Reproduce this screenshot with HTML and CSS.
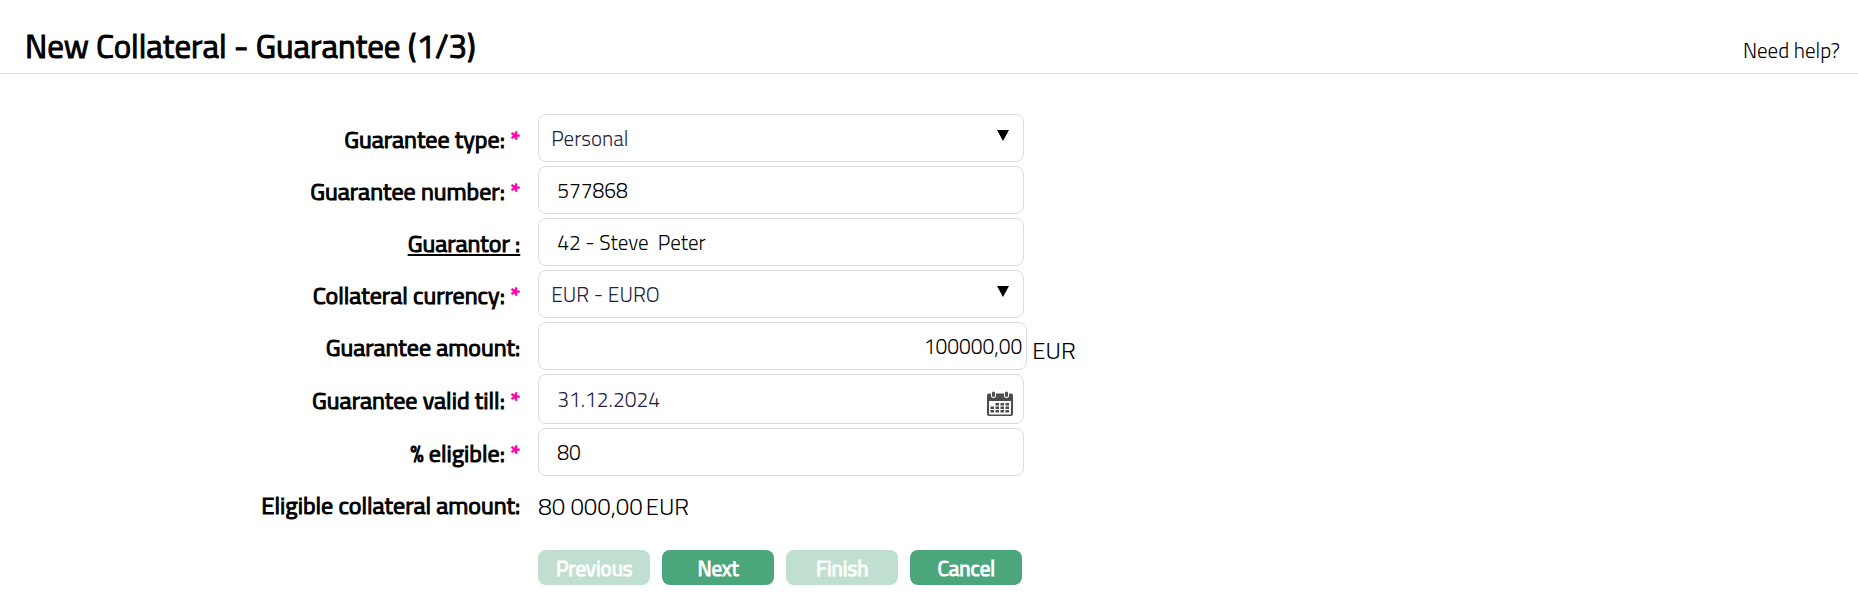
FILE: index.html
```
<!DOCTYPE html>
<html lang="en">
<head>
<meta charset="UTF-8">
<title>New Collateral - Guarantee</title>
<link rel="stylesheet" href="styles.css">
</head>
<body>
  <div class="header">
    <h1>New Collateral - Guarantee (1/3)</h1>
    <a class="help" href="#help">Need help?</a>
  </div>

  <form class="form">
    <div class="row">
      <label for="guarantee_type">Guarantee type: <span class="req">*</span></label>
      <div class="field">
        <select id="guarantee_type">
          <option>Personal</option>
        </select>
        <svg class="arrow" viewBox="0 0 12 11"><path d="M0 0h12L6 11z"/></svg>
      </div>
    </div>

    <div class="row">
      <label for="guarantee_number">Guarantee number: <span class="req">*</span></label>
      <div class="field">
        <input type="text" id="guarantee_number" value="577868">
      </div>
    </div>

    <div class="row">
      <label for="guarantor" class="link">Guarantor :</label>
      <div class="field">
        <input type="text" id="guarantor" value="42 - Steve  Peter">
      </div>
    </div>

    <div class="row">
      <label for="currency">Collateral currency: <span class="req">*</span></label>
      <div class="field">
        <select id="currency">
          <option>EUR - EURO</option>
        </select>
        <svg class="arrow" viewBox="0 0 12 11"><path d="M0 0h12L6 11z"/></svg>
      </div>
    </div>

    <div class="row">
      <label for="amount">Guarantee amount:</label>
      <div class="field wide">
        <input type="text" id="amount" class="amount" value="100000,00">
      </div>
      <span class="unit">EUR</span>
    </div>

    <div class="row">
      <label for="valid_till">Guarantee valid till: <span class="req">*</span></label>
      <div class="field">
        <input type="text" id="valid_till" class="date" value="31.12.2024">
        <button type="button" class="calendar" aria-label="Pick a date">
          <svg viewBox="0 0 26 25">
            <path fill="#4c4c4c" fill-rule="evenodd" d="M2 2.500h2v2a2.500 2.500 0 0 0 5 0v-2h8v2a2.500 2.500 0 0 0 5 0v-2h2a2 2 0 0 1 2 2V23a2 2 0 0 1-2 2H2a2 2 0 0 1-2-2V4.500a2 2 0 0 1 2-2zM2 10v12.500a1 1 0 0 0 1 1h20a1 1 0 0 0 1-1V10z"/>
            <path stroke="#4c4c4c" stroke-width="3" stroke-linecap="round" d="M6.500 2v2.500M19.500 2v2.500"/>
            <path fill="#4c4c4c" d="M8.500 12H12v2.500H8.500zM13.500 12H17v2.500h-3.500zM18.500 12H22v2.500h-3.500zM3.500 15.500H7V18H3.500zM8.500 15.500H12V18H8.500zM13.500 15.500H17V18h-3.500zM18.500 15.500H22V18h-3.500zM3.500 19H7v2.500H3.500zM8.500 19H12v2.500H8.500zM13.500 19H17v2.500h-3.500zM18.500 19H22v2.500h-3.500z"/>
          </svg>
        </button>
      </div>
    </div>

    <div class="row">
      <label for="eligible">% eligible: <span class="req">*</span></label>
      <div class="field">
        <input type="text" id="eligible" value="80">
      </div>
    </div>

    <div class="row total">
      <label for="eligible_amount">Eligible collateral amount:</label>
      <output id="eligible_amount"><span>80 000,00</span><span>EUR</span></output>
    </div>

    <div class="buttons">
      <button type="button" class="button" disabled>Previous</button>
      <button type="button" class="button">Next</button>
      <button type="button" class="button" disabled>Finish</button>
      <button type="button" class="button">Cancel</button>
    </div>
  </form>
</body>
</html>
```
FILE: styles.css
```
* { box-sizing: border-box; }
body {
margin: 0;
color: #000;
background: #fff;
font-family: "Titillium Web", Roboto, sans-serif;
font-size: 24px;
font-weight: 300;
line-height: 32px;
}
.header {
display: flex;
justify-content: space-between;
align-items: baseline;
padding: 26px 18px 6px 25px;
border-bottom: 1px solid #ddd;
}
h1 {
margin: 0;
font-size: 33px;
font-weight: 400;
line-height: 41px;
-webkit-text-stroke: 1px;
}
.help {
color: #000;
font-size: 21px;
text-decoration: none;
}
.form {
display: flex;
flex-direction: column;
gap: 4px;
padding-top: 40px;
}
.row {
display: flex;
align-items: center;
}
.row label {
width: 28%;
margin-right: 18px;
padding-top: 2px;
font-weight: 400;
text-align: right;
-webkit-text-stroke: 1px;
}
.row .link { text-decoration: underline; }
.req { color: #f0a; }
.field {
position: relative;
width: 486px;
}
.wide { width: 489px; }
input, select {
display: block;
width: 100%;
height: 48px;
padding: 0 18px;
border: 1px solid #ddd;
border-radius: 8px;
color: #000;
background: #fff;
font-family: inherit;
font-size: 21px;
font-weight: 300;
}
select {
appearance: none;
padding: 0 12px;
color: #224;
}
.arrow {
position: absolute;
top: 16px; right: 15px;
width: 12px;
height: 11px;
pointer-events: none;
}
.amount {
padding-right: 4px;
text-align: right;
}
.unit {
margin-left: 5px;
padding-top: 8px;
}
.date {
height: 50px;
color: #224;
}
.calendar {
position: absolute;
top: 16px; right: 11px;
width: 26px;
height: 26px;
padding: 0;
border: 0;
background: none;
cursor: pointer;
}
.calendar svg { display: block; }
.total { height: 48px; }
output {
display: flex;
gap: 3px;
padding-top: 4px;
}
.buttons {
display: flex;
gap: 12px;
margin-left: 28%;
padding: 18px 0 0 18px;
}
.button {
width: 112px;
height: 35px;
padding: 0;
border: 0;
border-radius: 8px;
color: #fff;
background: #4ca67b;
font-family: inherit;
font-size: 21px;
font-weight: 400;
-webkit-text-stroke: 1px;
cursor: pointer;
}
.button[disabled] {
opacity: 0.35;
cursor: default;
}
```
